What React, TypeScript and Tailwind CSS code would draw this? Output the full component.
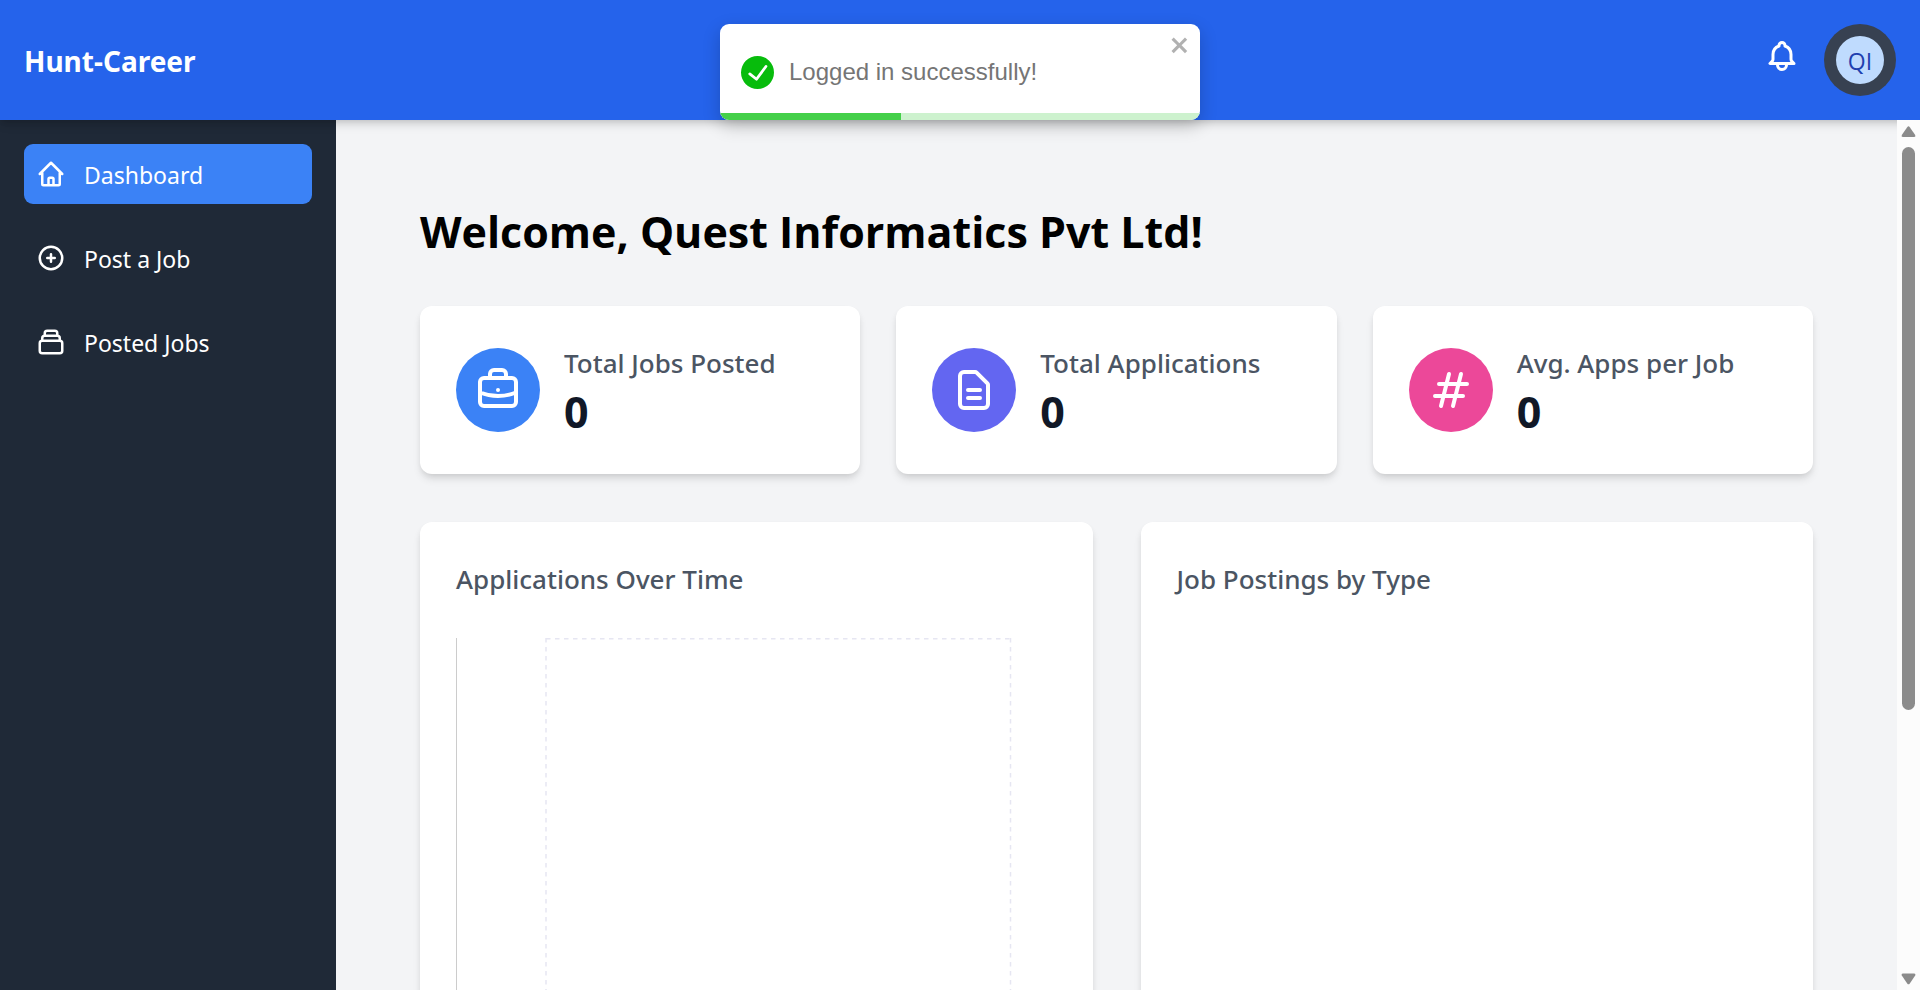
import type { ReactNode } from 'react';
import type { IconType } from 'react-icons';
import {
  HiOutlineBell,
  HiOutlineBriefcase,
  HiOutlineCollection,
  HiOutlineDocumentText,
  HiOutlineHashtag,
  HiOutlineHome,
  HiOutlinePlusCircle,
} from 'react-icons/hi';

function Header() {
  return (
    <header className="relative z-10 flex h-[120px] shrink-0 items-center justify-between bg-[#2563eb] px-6 text-white shadow-[0_6px_9px_-1px_rgba(0,0,0,0.12),0_3px_6px_-2px_rgba(0,0,0,0.12)]">
      <div className="pt-0.5 text-[28px] leading-[42px] font-bold">Hunt-Career</div>
      <div className="flex items-center gap-6">
        <button type="button" aria-label="Notifications" className="pb-2">
          <HiOutlineBell size={36} />
        </button>
        <button
          type="button"
          className="flex size-[72px] items-center justify-center rounded-full bg-[#374151]"
        >
          <span className="flex size-12 items-center justify-center rounded-full bg-[#bfdbfe] pt-0.5 font-['Open_Sans',sans-serif] text-[23px] leading-9 text-[#1e40af]">
            QI
          </span>
        </button>
      </div>
    </header>
  );
}

type NavItem = { label: string; icon: IconType; active?: boolean };

const navItems: NavItem[] = [
  { label: 'Dashboard', icon: HiOutlineHome, active: true },
  { label: 'Post a Job', icon: HiOutlinePlusCircle },
  { label: 'Posted Jobs', icon: HiOutlineCollection },
];

function Sidebar() {
  return (
    <nav className="flex w-[336px] shrink-0 flex-col gap-6 bg-[#1f2937] p-6">
      {navItems.map(({ label, icon: Icon, active }) => (
        <a
          key={label}
          href="#"
          className={
            active
              ? 'flex h-[60px] items-center gap-[18px] rounded-[9px] bg-[#3b82f6] px-3 text-white'
              : 'flex h-[60px] items-center gap-[18px] rounded-[9px] px-3 text-white'
          }
        >
          <Icon size={30} />
          <span className="pt-0.5 text-[23px] leading-9">{label}</span>
        </a>
      ))}
    </nav>
  );
}

const cardShadow =
  'rounded-xl bg-white shadow-[0_6px_9px_-1px_rgba(0,0,0,0.1),0_3px_6px_-2px_rgba(0,0,0,0.1)]';

const stats = [
  { label: 'Total Jobs Posted', value: 0, icon: HiOutlineBriefcase, badge: 'bg-[#3b82f6]' },
  { label: 'Total Applications', value: 0, icon: HiOutlineDocumentText, badge: 'bg-[#6366f1]' },
  { label: 'Avg. Apps per Job', value: 0, icon: HiOutlineHashtag, badge: 'bg-[#ec4899]' },
];

function StatCards() {
  return (
    <div className="grid grid-cols-3 gap-9">
      {stats.map(({ label, value, icon: Icon, badge }) => (
        <div key={label} className={`flex items-center gap-6 p-9 ${cardShadow}`}>
          <div className={`rounded-full p-[18px] text-white ${badge}`}>
            <Icon size={48} />
          </div>
          <div>
            <p className="text-[26px] leading-[42px] font-medium text-[#4b5563]">{label}</p>
            <p className="pt-0.5 text-[43px] leading-[52px] font-bold text-[#111827]">{value}</p>
          </div>
        </div>
      ))}
    </div>
  );
}

function ChartCard({ title, children }: { title: string; children?: ReactNode }) {
  return (
    <section className={`p-9 ${cardShadow}`}>
      <h2 className="mb-6 text-[26px] leading-[42px] font-medium text-[#4b5563]">{title}</h2>
      <div className="h-[450px] pt-[14px]">{children}</div>
    </section>
  );
}

function EmptyLineChart() {
  return (
    <div className="h-full border-l border-[#cccccc] pr-[46px] pl-[89px]">
      <svg className="h-full w-full overflow-visible" aria-hidden="true">
        <g stroke="#e6e6f2" strokeWidth="1.5" strokeDasharray="4.5 4.5">
          <line x1="0" y1="0.75" x2="100%" y2="0.75" />
          <line x1="0" y1="0" x2="0" y2="100%" />
          <line x1="100%" y1="0" x2="100%" y2="100%" />
        </g>
      </svg>
    </div>
  );
}

function ScrollRail() {
  return (
    <div className="flex w-[23px] shrink-0 flex-col items-center bg-[#fcfcfc] pt-1 pb-1" aria-hidden="true">
      <svg width="15" height="23" viewBox="0 0 15 23" fill="#8b8b8b">
        <path d="M6.2 3.2Q7.5 1.4 8.8 3.2L14.2 11Q15 13 13.2 13H1.8Q0 13 .8 11Z" />
      </svg>
      <div className="h-[563px] w-[13px] rounded-full bg-[#8b8b8b]" />
      <svg className="mt-auto" width="15" height="13" viewBox="0 0 15 13" fill="#8b8b8b">
        <path d="M6.2 10.4Q7.5 12.2 8.8 10.4L14.2 2.4Q15 .4 13.2 .4H1.8Q0 .4 .8 2.4Z" />
      </svg>
    </div>
  );
}

function Toast() {
  return (
    <div
      role="alert"
      className="absolute top-6 left-1/2 z-20 flex h-24 w-[480px] -translate-x-1/2 items-center gap-[15px] overflow-hidden rounded-[9px] bg-white pr-3 pl-[21px] font-['Liberation_Sans',Arial,sans-serif] shadow-[0_6px_18px_0_rgba(0,0,0,0.2)]"
    >
      <svg width="33" height="33" viewBox="0 0 24 24" fill="#07bc0c" aria-hidden="true">
        <path d="M12 0a12 12 0 1012 12A12.014 12.014 0 0012 0zm6.927 8.2l-6.845 9.289a1.011 1.011 0 01-1.43.188l-4.888-3.908a1 1 0 111.25-1.562l4.076 3.261 6.227-8.451a1 1 0 111.61 1.183z" />
      </svg>
      <p className="text-[24px] leading-9 text-[#757575]">Logged in successfully!</p>
      <button
        type="button"
        aria-label="Close"
        className="absolute top-[9px] right-[9px] text-black opacity-30"
      >
        <svg width="21" height="24" viewBox="0 0 14 16" fill="currentColor" aria-hidden="true">
          <path
            fillRule="evenodd"
            d="M7.71 8.23l3.75 3.75-1.48 1.48-3.75-3.75-3.75 3.75L1 11.98l3.75-3.75L1 4.48 2.48 3l3.75 3.75L9.98 3l1.48 1.48-3.75 3.75z"
          />
        </svg>
      </button>
      <div className="absolute inset-x-0 bottom-0 h-[7px] bg-[#cdf2ce]">
        <div className="h-full bg-[#45d04a]" style={{ width: '37.7%' }} />
      </div>
    </div>
  );
}

export default function App() {
  return (
    <div className="relative flex h-screen flex-col overflow-hidden bg-[#f3f4f6] font-['Noto_Sans',sans-serif]">
      <Header />
      <div className="flex min-h-0 flex-1">
        <Sidebar />
        <main className="min-w-0 flex-1 overflow-y-auto p-[84px] [scrollbar-width:none]">
          <h1 className="mb-12 pt-0.5 font-['Open_Sans',sans-serif] text-[43px] leading-[52px] font-bold text-black">
            Welcome, Quest Informatics Pvt Ltd!
          </h1>
          <StatCards />
          <div className="mt-12 grid grid-cols-2 gap-12">
            <ChartCard title="Applications Over Time">
              <EmptyLineChart />
            </ChartCard>
            <ChartCard title="Job Postings by Type" />
          </div>
        </main>
        <div className="relative z-10 flex">
          <ScrollRail />
        </div>
      </div>
      <Toast />
    </div>
  );
}
